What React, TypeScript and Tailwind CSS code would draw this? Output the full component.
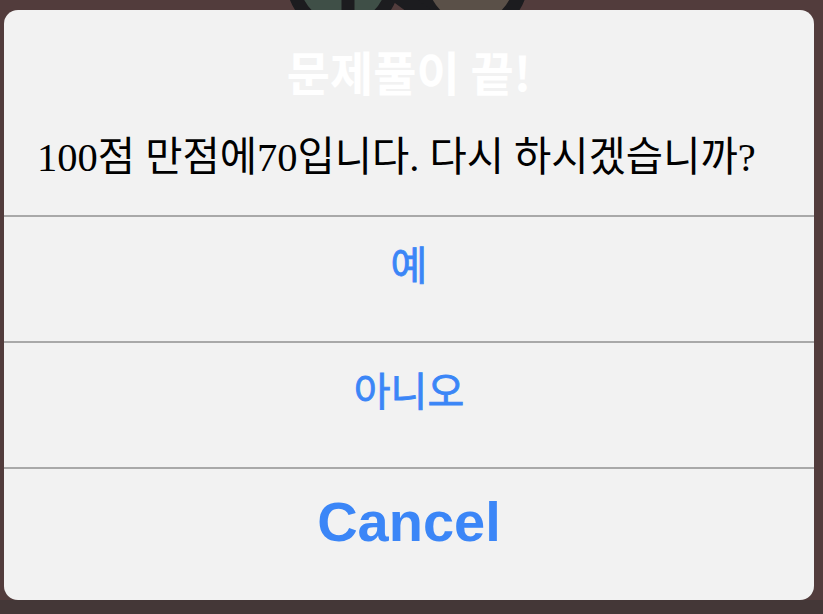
import React from "react";

export default function App() {
  return (
    <div className="relative w-[823px] h-[614px] overflow-hidden bg-[#523c3c] flex flex-col">
      <svg className="absolute left-[280px] top-[-120px]" width="260" height="140" viewBox="0 0 260 140">
        <circle cx="63" cy="100" r="50" fill="#3f4f47" stroke="#1c1c1f" strokeWidth="13" />
        <line x1="68" y1="40" x2="68" y2="140" stroke="#1c1c1f" strokeWidth="13" />
        <circle cx="191" cy="100" r="50" fill="#5a5048" stroke="#1c1c1f" strokeWidth="14" />
        <line x1="108" y1="108" x2="146" y2="136" stroke="#1c1c1f" strokeWidth="16" />
      </svg>
      <div className="flex-1 pt-[10px] pl-[4px] relative">
        <div className="w-[810px] h-[590px] bg-[#f2f2f2] rounded-[14px] flex flex-col overflow-hidden">
          <div
            className="h-[114px] pt-[36px] text-center text-white font-bold text-[47px] leading-[50px]"
            style={{ fontFamily: '"Noto Sans CJK KR", sans-serif' }}
          >
            문제풀이 끝!
          </div>
          <div
            className="h-[91px] pl-[33px] text-black text-[40.5px] leading-[44px] pt-[12px] whitespace-nowrap"
            style={{ fontFamily: '"Liberation Serif", "Noto Sans CJK KR", serif' }}
          >
            100점 만점에70입니다. 다시 하시겠습니까?
          </div>
          <div className="h-[2px] bg-[#a9a9a9]" />
          <div
            className="h-[124px] pt-[21px] text-center text-[#3b86f7] text-[40px] leading-[50px] font-normal [-webkit-text-stroke:0.8px_#3b86f7]"
            style={{ fontFamily: '"Noto Sans CJK KR", sans-serif' }}
          >
            예
          </div>
          <div className="h-[2px] bg-[#a9a9a9]" />
          <div
            className="h-[124px] pt-[21px] text-center text-[#3b86f7] text-[40px] leading-[50px] font-normal [-webkit-text-stroke:0.8px_#3b86f7]"
            style={{ fontFamily: '"Noto Sans CJK KR", sans-serif' }}
          >
            아니오
          </div>
          <div className="h-[2px] bg-[#a9a9a9]" />
          <div
            className="flex-1 pt-[21px] text-center text-[#3b86f7] text-[56px] leading-[64px] font-bold"
            style={{ fontFamily: '"Liberation Sans", Arial, sans-serif' }}
          >
            Cancel
          </div>
        </div>
      </div>
      <div className="h-[14px] bg-[#443737]" />
    </div>
  );
}
